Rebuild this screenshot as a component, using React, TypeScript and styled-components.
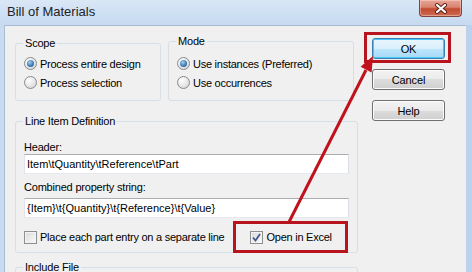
import React from "react";
import styled, { createGlobalStyle } from "styled-components";

const GlobalStyle = createGlobalStyle`
  body {
    margin: 0;
    background: #ffffff;
    font-family: "Liberation Sans", Arial, sans-serif;
  }
`;

const Window = styled.div`
  position: relative;
  width: 472px;
  height: 272px;
  overflow: hidden;
  display: flex;
  flex-direction: column;
  background: linear-gradient(to right, #c9dbf0, #bcd2ec);
`;

const TitleBar = styled.div`
  height: 25px;
  flex-shrink: 0;
  display: flex;
  align-items: flex-start;
  background: linear-gradient(to bottom, #dae7f6 0%, #cddff3 60%, #c6d9ef 100%);
`;

const Title = styled.span`
  margin: 4px 0 0 7px;
  font-size: 13px;
  line-height: 15px;
  color: #222;
`;

const CloseButton = styled.div`
  margin-left: auto;
  margin-right: 10px;
  width: 43px;
  height: 17px;
  box-sizing: border-box;
  display: flex;
  align-items: center;
  justify-content: center;
  border: 1px solid #80443c;
  border-top: none;
  border-radius: 0 0 4px 4px;
  background: linear-gradient(to bottom, #e8a597 0%, #d9836f 45%, #c14a32 55%, #cf6a52 100%);
  box-shadow: inset 0 0 0 1px rgba(255, 220, 210, 0.45);
`;

const Frame = styled.div`
  flex: 1;
  display: flex;
`;

const Client = styled.div`
  flex: 1;
  margin-left: 4px;
  margin-right: 6px;
  background: #f0f0f0;
  border-top: 1px solid #a9bcd4;
  border-left: 1px solid #a9bcd4;
  padding: 9px 0 0 10px;
  font-size: 11px;
  color: #000;
`;

const Main = styled.div`
  display: flex;
  align-items: flex-start;
`;

const LeftColumn = styled.div`
  width: 343px;
  display: flex;
  flex-direction: column;
`;

const TopRow = styled.div`
  display: flex;
  align-items: flex-start;
  gap: 7px;
`;

const Group = styled.fieldset<{ $width?: number; $top?: number; $pad?: string }>`
  margin: ${(p) => p.$top ?? 0}px 0 0 0;
  width: ${(p) => (p.$width ? `${p.$width}px` : "auto")};
  box-sizing: border-box;
  min-width: 0;
  padding: ${(p) => p.$pad ?? "4px 8px 8px 8px"};
  border: 1px solid #d5dfe5;
  border-radius: 3px;
`;

const Legend = styled.legend`
  margin-left: -1px;
  padding: 0 2px;
  font-size: 11px;
  line-height: 13px;
  letter-spacing: -0.2px;
`;

const OptionRow = styled.label`
  display: flex;
  align-items: center;
  gap: 3px;
  height: 19px;
  letter-spacing: -0.25px;
  white-space: nowrap;
`;

const RadioMark = styled.span<{ $checked?: boolean }>`
  position: relative;
  width: 13px;
  height: 13px;
  box-sizing: border-box;
  border-radius: 50%;
  border: 1px solid #8a8a8a;
  background: radial-gradient(circle at 35% 30%, #ffffff 0%, #e6e6e6 55%, #cfcfcf 100%);
  flex-shrink: 0;

  &::after {
    content: "";
    display: ${(p) => (p.$checked ? "block" : "none")};
    position: absolute;
    left: 2px;
    top: 2px;
    width: 7px;
    height: 7px;
    border-radius: 50%;
    background: radial-gradient(circle at 40% 35%, #a9d0f0 0%, #3d7fb6 55%, #1d4e7c 100%);
  }
`;

const FieldLabel = styled.div<{ $top?: number }>`
  margin-top: ${(p) => p.$top ?? 0}px;
  height: 14px;
  line-height: 14px;
  letter-spacing: -0.2px;
`;

const TextBox = styled.input<{ $top?: number }>`
  display: block;
  margin: ${(p) => p.$top ?? 0}px 0 0 0;
  width: 100%;
  height: 20px;
  box-sizing: border-box;
  padding: 0 2px;
  border: 1px solid;
  border-color: #abadb3 #dbdfe6 #e3e9ef #e2e3ea;
  background: #ffffff;
  font-family: "Liberation Sans", Arial, sans-serif;
  font-size: 11px;
  color: #000;
  outline: none;
`;

const CheckRow = styled.div`
  margin-top: 11px;
  height: 16px;
  display: flex;
  align-items: center;
  gap: 26px;
`;

const CheckItem = styled.label`
  display: flex;
  align-items: center;
  gap: 3px;
  letter-spacing: -0.25px;
  white-space: nowrap;
`;

const CheckMark = styled.span`
  width: 13px;
  height: 13px;
  box-sizing: border-box;
  border: 1px solid #8e8f8f;
  background: linear-gradient(135deg, #d8d8d8 0%, #eeeeee 60%, #fbfbfb 100%);
  box-shadow: inset 0 0 0 1px #f4f4f4;
  display: flex;
  align-items: center;
  justify-content: center;
  flex-shrink: 0;
`;

const IncludeBody = styled.div`
  height: 40px;
`;

const ButtonColumn = styled.div`
  margin: 3px 0 0 14px;
  display: flex;
  flex-direction: column;
  gap: 10px;
`;

const DialogButton = styled.div<{ $default?: boolean }>`
  width: 73px;
  height: 21px;
  box-sizing: border-box;
  display: flex;
  align-items: center;
  justify-content: center;
  border: 1px solid ${(p) => (p.$default ? "#3c7fb1" : "#707070")};
  border-radius: 3px;
  background: ${(p) =>
    p.$default
      ? "linear-gradient(to bottom, #eaf6fd 0%, #d9f0fc 50%, #bee6fd 50%, #a7d9f5 100%)"
      : "linear-gradient(to bottom, #f2f2f2 0%, #ebebeb 50%, #dddddd 50%, #cfcfcf 100%)"};
  box-shadow: inset 0 0 0 1px ${(p) => (p.$default ? "#48c8f5" : "#fcfcfc")};
  font-size: 11px;
  letter-spacing: -0.1px;
`;

const Overlay = styled.svg`
  position: absolute;
  left: 0;
  top: 0;
  pointer-events: none;
`;

const Radio: React.FC<{ checked?: boolean; label: string }> = ({ checked, label }) => (
  <OptionRow>
    <RadioMark $checked={checked} />
    {label}
  </OptionRow>
);

const Check: React.FC<{ checked?: boolean; label: string }> = ({ checked, label }) => (
  <CheckItem>
    <CheckMark>
      {checked && (
        <svg width="9" height="9" viewBox="0 0 9 9">
          <path d="M1 4.5 L3.5 7.5 L8 1" fill="none" stroke="#44578f" strokeWidth="1.8" />
        </svg>
      )}
    </CheckMark>
    {label}
  </CheckItem>
);

const App: React.FC = () => {
  return (
    <>
      <GlobalStyle />
      <Window>
        <TitleBar>
          <Title>Bill of Materials</Title>
          <CloseButton>
            <svg width="14" height="11" viewBox="0 0 14 11">
              <path d="M3 2 L11 9 M11 2 L3 9" stroke="#5a1e16" strokeWidth="4" strokeLinecap="round" />
              <path d="M3 2 L11 9 M11 2 L3 9" stroke="#ffffff" strokeWidth="2.2" strokeLinecap="round" />
            </svg>
          </CloseButton>
        </TitleBar>
        <Frame>
          <Client>
            <Main>
              <LeftColumn>
                <TopRow>
                  <Group $width={146} $top={2} $pad="4px 8px 8px 8px">
                    <Legend>Scope</Legend>
                    <Radio checked label="Process entire design" />
                    <Radio label="Process selection" />
                  </Group>
                  <Group $width={186} $pad="6px 8px 8px 8px">
                    <Legend>Mode</Legend>
                    <Radio checked label="Use instances (Preferred)" />
                    <Radio label="Use occurrences" />
                  </Group>
                </TopRow>
                <Group $top={14} $pad="12px 8px 7px 8px">
                  <Legend>Line Item Definition</Legend>
                  <FieldLabel>Header:</FieldLabel>
                  <TextBox readOnly value="Item\tQuantity\tReference\tPart" />
                  <FieldLabel $top={6}>Combined property string:</FieldLabel>
                  <TextBox $top={4} readOnly value="{Item}\t{Quantity}\t{Reference}\t{Value}" />
                  <CheckRow>
                    <Check label="Place each part entry on a separate line" />
                    <Check checked label="Open in Excel" />
                  </CheckRow>
                </Group>
                <Group $top={8} $pad="4px 8px 8px 8px">
                  <Legend>Include File</Legend>
                  <IncludeBody />
                </Group>
              </LeftColumn>
              <ButtonColumn>
                <DialogButton $default>OK</DialogButton>
                <DialogButton>Cancel</DialogButton>
                <DialogButton>Help</DialogButton>
              </ButtonColumn>
            </Main>
          </Client>
        </Frame>
        <Overlay width="472" height="272" viewBox="0 0 472 272">
          <rect x="365.5" y="33.5" width="84" height="28" fill="none" stroke="#b8141e" strokeWidth="3" />
          <rect x="234.5" y="222.5" width="112" height="29" fill="none" stroke="#b8141e" strokeWidth="3" />
          <line x1="289" y1="222" x2="366" y2="70" stroke="#c0121c" strokeWidth="3" />
          <polygon points="373,56 371.6,72.4 360.6,66.8" fill="#c0121c" />
        </Overlay>
      </Window>
    </>
  );
};

export default App;
